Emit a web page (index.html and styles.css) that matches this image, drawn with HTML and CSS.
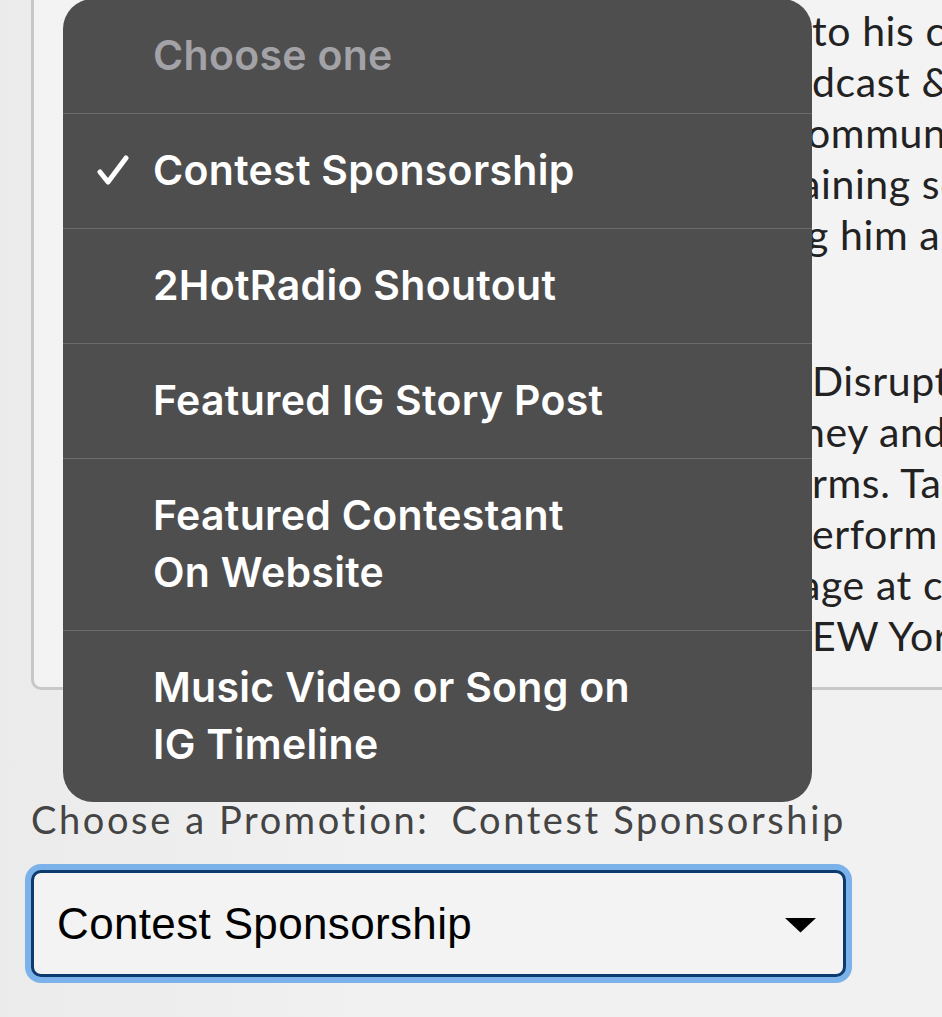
FILE: index.html
```html
<!DOCTYPE html>
<html lang="en">
<head>
<meta charset="utf-8">
<title>Choose a Promotion</title>
<link rel="stylesheet" href="styles.css">
</head>
<body>
<main class="page">
  <article class="bio">
    <p>
      <span class="ln"><span class="pre">Through his hard work and dedication </span><span class="post">to his craft, he</span></span>
      <span class="ln"><span class="pre">Taxx has been featured on many po</span><span class="post">dcast &amp; radio</span></span>
      <span class="ln"><span class="pre">shows and has built a loyal online c</span><span class="post nudge-o">ommunity</span></span>
      <span class="ln"><span class="pre">of supporters. His music is entert</span><span class="post nudge-a">aining sounds</span></span>
      <span class="ln"><span class="pre">and honest lyrics connect with fans, earnin</span><span class="post nudge-g">g him a</span></span>
      <span class="ln"><span class="pre">growing fanbase.</span><span class="post"></span></span>
    </p>
    <p>
      <span class="ln"><span class="pre">Now, Taxx is ready to bring his </span><span class="post">Disruptive</span></span>
      <span class="ln"><span class="pre">sound to listeners everywhere, making mo</span><span class="post nudge-n">ney and</span></span>
      <span class="ln"><span class="pre">building a presence across all platfo</span><span class="post">rms. Taxx</span></span>
      <span class="ln"><span class="pre">continues to write, record and p</span><span class="post">erform at</span></span>
      <span class="ln"><span class="pre">and looks forward to taking the st</span><span class="post nudge-a">age at clubs</span></span>
      <span class="ln"><span class="pre">and shows throughout the N</span><span class="post">EW York</span></span>
    </p>
  </article>

  <label class="promo-label" for="promo">Choose a Promotion:<span class="promo-current">Contest Sponsorship</span></label>

  <div class="select" id="promo">
    <span class="select-value">Contest Sponsorship</span>
    <svg class="select-arrow" width="33" height="16" viewBox="0 0 33 16" aria-hidden="true">
      <polygon points="1,1 32,1 16.5,15.5" fill="#000"/>
    </svg>
  </div>

  <ul class="menu" role="listbox">
    <li class="opt opt-placeholder"><span></span><span>Choose one</span></li>
    <li class="opt" aria-selected="true">
      <svg class="check" width="34" height="32" viewBox="0 0 34 32" aria-hidden="true">
        <polyline points="4,17 12,27 30,3" fill="none" stroke="#fff" stroke-width="5" stroke-linecap="round" stroke-linejoin="round"/>
      </svg>
      <span>Contest Sponsorship</span>
    </li>
    <li class="opt"><span></span><span>2HotRadio Shoutout</span></li>
    <li class="opt"><span></span><span>Featured IG Story Post</span></li>
    <li class="opt"><span></span><span>Featured Contestant<br>On Website</span></li>
    <li class="opt"><span></span><span>Music Video or Song on<br>IG Timeline</span></li>
  </ul>
</main>
</body>
</html>
```

FILE: styles.css
```css
html, body {
  margin: 0;
  height: 100%;
  overflow: hidden;
}

body {
  background: linear-gradient(90deg, #ebebeb 0%, #f1f1f1 40%, #f1f1f1 100%);
  font-family: Lato, "Open Sans", sans-serif;
}

.page {
  display: flow-root;
  position: relative;
  padding-left: 31px;
}

/* bio card, page scrolled so its top edge sits above the window */
.bio {
  width: 1000px;
  margin-top: -38px;
  padding: 40px 0 26px 34px;
  border: 3px solid #c8c8c8;
  border-radius: 10px;
  background: #f3f3f3;
  color: #222;
  font-size: 41px;
  letter-spacing: 0.6px;
  line-height: 51px;
}

.bio p {
  margin: 0 0 44px;
}

.bio p:last-child {
  margin-bottom: 0;
}

.ln {
  display: grid;
  grid-template-columns: 744px max-content;
  white-space: pre;
}

.pre {
  overflow: hidden;
  text-align: right;
}

/* pull a split word's first letter back under the column edge */
.nudge-o { margin-left: -5px; }
.nudge-a { margin-left: -12px; }
.nudge-g { margin-left: -5px; }
.nudge-n { margin-left: -10px; }

.promo-label {
  display: block;
  margin-top: 106px;
  color: #444;
  font-size: 38px;
  letter-spacing: 2.6px;
  line-height: 46px;
}

.promo-current {
  margin-left: 22px;
}

.select {
  box-sizing: border-box;
  display: flex;
  align-items: center;
  justify-content: space-between;
  width: 815px;
  height: 107px;
  margin-top: 28px;
  padding: 0 26px 0 23px;
  border: 3px solid #0d3a6e;
  border-radius: 10px;
  background: #f3f3f3;
  box-shadow: 0 0 0 6px #7cb2ea;
  font-family: "Liberation Sans", Arial, sans-serif;
  font-size: 44px;
  letter-spacing: 0.35px;
  color: #000;
}

.select-arrow {
  display: block;
  margin-top: 2px;
}

/* native option picker shown over the page */
.menu {
  position: absolute;
  top: -1px;
  left: 63px;
  width: 749px;
  margin: 0;
  padding: 0;
  list-style: none;
  background: #4e4e4e;
  border-radius: 30px;
  overflow: hidden;
  font-family: Inter, "Noto Sans", sans-serif;
  font-weight: 600;
  font-size: 41px;
  letter-spacing: 0.3px;
  line-height: 57px;
  color: #fff;
}

.opt {
  display: grid;
  grid-template-columns: 90px 1fr;
  align-items: center;
  padding: 28px 24px 29px 0;
  border-top: 1px solid #6b6b6b;
}

.opt:first-child {
  border-top: none;
}

.opt-placeholder {
  color: #a2a2a7;
}

.check {
  display: block;
  margin-left: 33px;
}
```
